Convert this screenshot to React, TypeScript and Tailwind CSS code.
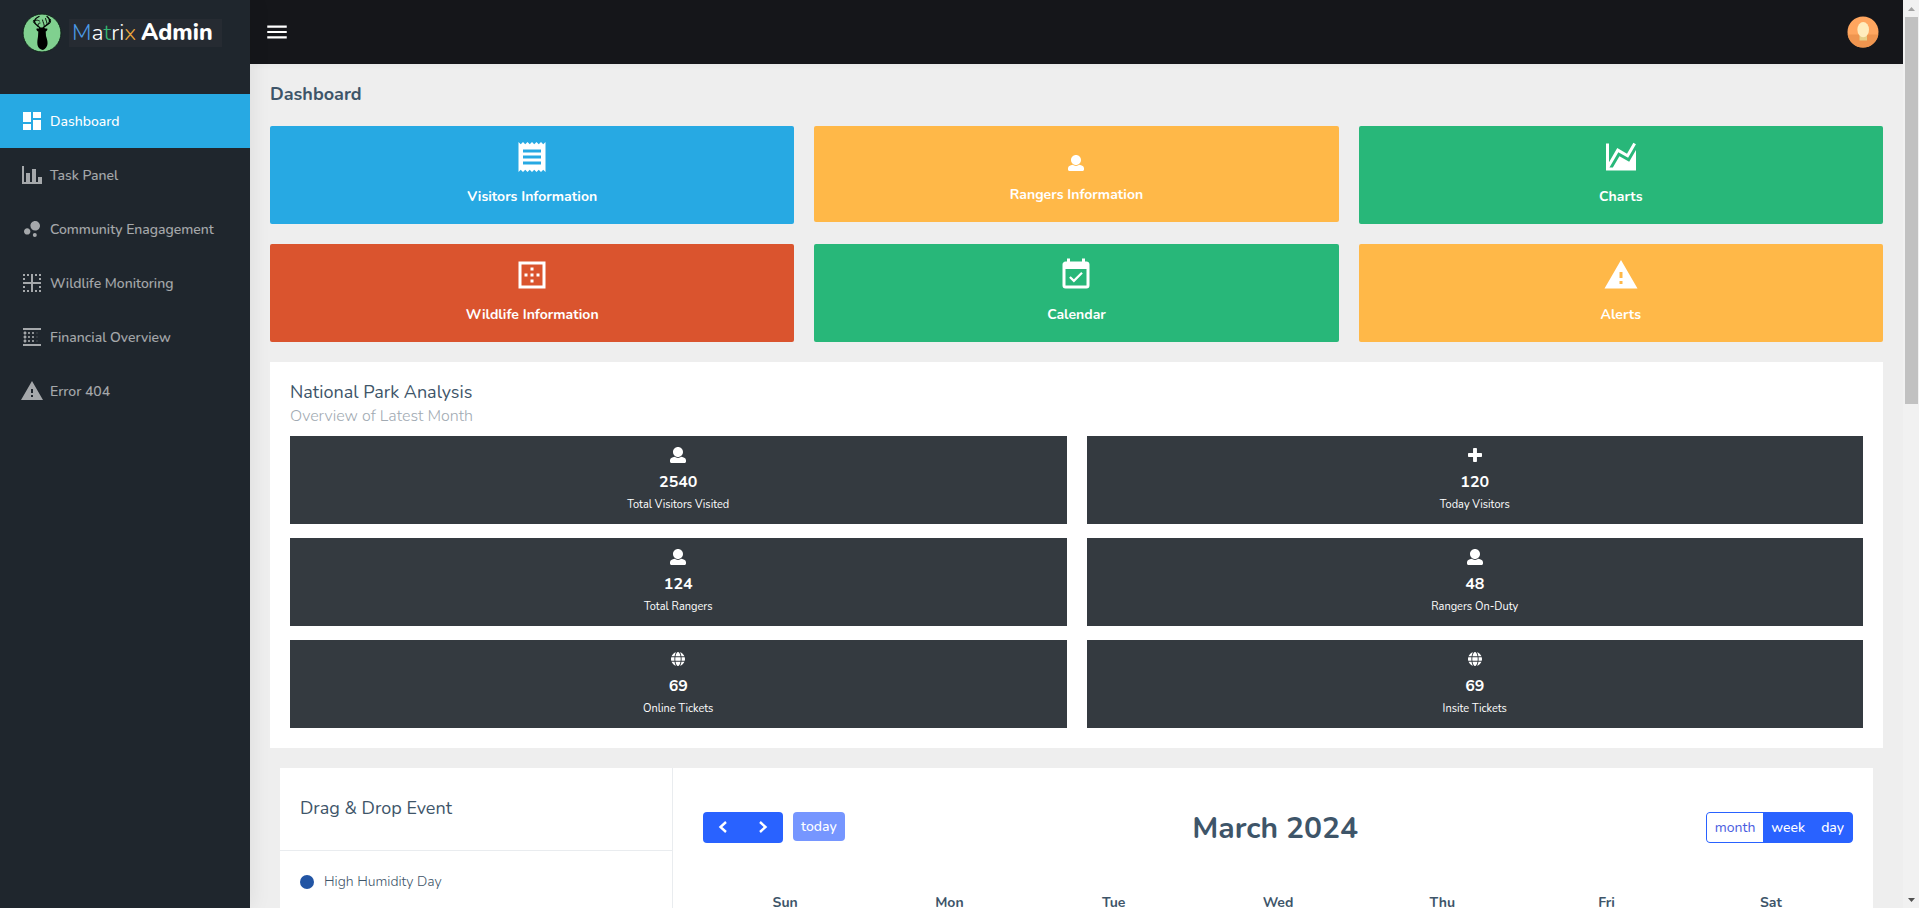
import type { ReactNode } from "react";
import { FaGlobe } from "react-icons/fa";
import { MdBlurLinear, MdBorderInner, MdBorderOuter, MdDashboard, MdMenu, MdReceipt } from "react-icons/md";

type IconProps = { className?: string };

function Glyph({ d, className, box = "0 0 24 24" }: { d: string; className?: string; box?: string }) {
  return (
    <svg viewBox={box} className={className} fill="currentColor" aria-hidden="true">
      <path d={d} />
    </svg>
  );
}

const ChartBar = ({ className }: IconProps) => (
  <Glyph className={className} d="M22,21H2V3H4V19H6V10H10V19H12V6H16V19H18V14H22V21Z" />
);
const ChartBubble = ({ className }: IconProps) => (
  <Glyph
    className={className}
    d="M7.2,11.2C8.97,11.2 10.4,12.63 10.4,14.4C10.4,16.17 8.97,17.6 7.2,17.6C5.43,17.6 4,16.17 4,14.4C4,12.63 5.43,11.2 7.2,11.2M14.8,16A2,2 0 0,1 16.8,18A2,2 0 0,1 14.8,20A2,2 0 0,1 12.8,18A2,2 0 0,1 14.8,16M15.2,4A4.8,4.8 0 0,1 20,8.8C20,11.45 17.85,13.6 15.2,13.6A4.8,4.8 0 0,1 10.4,8.8C10.4,6.15 12.55,4 15.2,4Z"
  />
);
const Alert = ({ className }: IconProps) => (
  <Glyph className={className} d="M13,14H11V10H13M13,18H11V16H13M1,21H23L12,2L1,21Z" />
);
const ChartArea = ({ className }: IconProps) => (
  <Glyph
    className={className}
    d="M17.45,15.18L22,7.31V19L22,21H2V3H4V15.54L9.5,6L16,9.78L20.24,2.45L21.97,3.45L16.74,12.5L10.23,8.75L4.31,19H6.57L10.96,11.44L17.45,15.18Z"
  />
);
const CalendarCheck = ({ className }: IconProps) => (
  <Glyph
    className={className}
    d="M19,19H5V8H19M19,3H18V1H16V3H8V1H6V3H5C3.89,3 3,3.9 3,5V19A2,2 0 0,0 5,21H19A2,2 0 0,0 21,19V5C21,3.89 20.1,3 19,3M16.53,11.06L15.47,10L10.59,14.88L8.47,12.76L7.41,13.82L10.59,17L16.53,11.06Z"
  />
);
const User = ({ className }: IconProps) => (
  <Glyph
    className={className}
    box="0 0 512 512"
    d="M256 0c88.366 0 160 71.634 160 160s-71.634 160-160 160S96 248.366 96 160 167.634 0 256 0zm183.283 333.821l-71.313-17.828c-74.923 53.89-165.738 41.864-223.94 0l-71.313 17.828C29.981 344.505 0 382.903 0 426.955V464c0 26.51 21.49 48 48 48h416c26.51 0 48-21.49 48-48v-37.045c0-44.052-29.981-82.45-72.717-93.134z"
  />
);
const Plus = ({ className }: IconProps) => (
  <Glyph
    className={className}
    box="0 0 448 512"
    d="M448 294.2v-76.4c0-13.3-10.7-24-24-24H286.2V56c0-13.3-10.7-24-24-24h-76.4c-13.3 0-24 10.7-24 24v137.8H24c-13.3 0-24 10.7-24 24v76.4c0 13.3 10.7 24 24 24h137.8V456c0 13.3 10.7 24 24 24h76.4c13.3 0 24-10.7 24-24V318.2H424c13.3 0 24-10.7 24-24z"
  />
);

const menu = [
  { label: "Dashboard", Icon: MdDashboard, active: true },
  { label: "Task Panel", Icon: ChartBar },
  { label: "Community Enagagement", Icon: ChartBubble },
  { label: "Wildlife Monitoring", Icon: MdBorderInner },
  { label: "Financial Overview", Icon: MdBlurLinear },
  { label: "Error 404", Icon: Alert },
];

const stats = [
  { value: "2540", label: "Total Visitors Visited", Icon: User },
  { value: "120", label: "Today Visitors", Icon: Plus },
  { value: "124", label: "Total Rangers", Icon: User },
  { value: "48", label: "Rangers On-Duty", Icon: User },
  { value: "69", label: "Online Tickets", Icon: FaGlobe },
  { value: "69", label: "Insite Tickets", Icon: FaGlobe },
];

const days = ["Sun", "Mon", "Tue", "Wed", "Thu", "Fri", "Sat"];

function Logo() {
  return (
    <a href="#" className="flex h-16 items-center pl-[22px]">
      <svg viewBox="0 0 40 40" className="size-10 shrink-0" aria-hidden="true">
        <circle cx="20" cy="21" r="19" fill="#80d08f" stroke="#10241a" strokeWidth="1" />
        <g fill="none" stroke="#000" strokeLinecap="round">
          <path d="M18.500 17C17.500 13.500 12.500 13.500 12.500 9.500C12.600 7 15 5.500 17 4.500" strokeWidth="1.300" />
          <path d="M13 11.500C11.500 11 11 10 11.500 8.500M12.800 8.500C14.500 7.500 16.500 8.500 17.500 9M16 14.500C15.500 12 16.500 11 18 11" strokeWidth="0.900" />
          <path d="M20.500 17C22 13 27 13.500 27.500 9.500C27.800 7.500 26.500 5.500 25 4.500" strokeWidth="1.300" />
          <path d="M26.800 12C28.500 11.500 29 9.500 28.500 7.500M25 13C25.500 10.500 24 9 23.500 6.500M22.300 14.500C22.300 12 21 10.500 20.500 8" strokeWidth="0.900" />
        </g>
        <path
          d="M18.500 15.500H21.500C22.500 16.500 24 16.500 25.500 16.700C25.300 18.500 24.300 19.200 23.700 19.600L24 24C25 27 25.800 29.500 25.500 32C25.300 34.500 23.500 37 21 38C18.500 37.800 16 36 15.500 33C15 30 15.500 27.500 16 24.500L16.300 19.600C15.500 19.200 14.500 18.500 14.300 16.700C16 16.500 17.500 16.500 18.500 15.500Z"
          fill="#000"
        />
      </svg>
      <span className="mt-0.5 ml-[7px] flex h-7 items-center gap-[5px] bg-[#262b32] pr-[9px] pl-[3px] text-[23px]/7">
        <span className="font-light text-white">
          <span className="text-[#4c9be8]">M</span>a<span className="text-[#35b673]">t</span>ri
          <span className="text-[#eaa63c]">x</span>
        </span>
        <span className="font-extrabold text-white">Admin</span>
      </span>
    </a>
  );
}

function Avatar() {
  return (
    <svg viewBox="0 0 32 32" className="size-8" aria-hidden="true">
      <defs>
        <clipPath id="avatar-round">
          <circle cx="16" cy="16" r="15.500" />
        </clipPath>
      </defs>
      <g clipPath="url(#avatar-round)">
        <rect width="32" height="32" fill="#ffa65f" />
        <rect y="18.500" width="32" height="14" fill="#ef954f" />
        <rect x="12.500" y="18" width="7.500" height="6.500" fill="#e6cf88" />
        <ellipse cx="16.200" cy="13.700" rx="5.800" ry="7.600" fill="#ffecbd" />
      </g>
    </svg>
  );
}

function Tile({ label, color, icon }: { label: string; color: string; icon: ReactNode }) {
  return (
    <a href="#" className={`flex flex-col items-center rounded-xs pb-4 text-sm/[22px] font-bold text-white ${color}`}>
      {icon}
      {label}
    </a>
  );
}

const tileIcon = "mt-[13px] mb-[11px] size-9";

function Scrollbar() {
  return (
    <div className="flex w-4 shrink-0 flex-col items-center bg-[#f1f1f1]" aria-hidden="true">
      <svg viewBox="0 0 16 17" className="h-[17px] w-4 shrink-0">
        <path d="M5 11L8.500 7L12 11Z" fill="#a3a3a3" />
      </svg>
      <div className="h-[387px] w-[13px] bg-[#c1c1c1]" />
      <svg viewBox="0 0 16 17" className="mt-auto h-[17px] w-4 shrink-0">
        <path d="M5 7L8.500 11L12 7Z" fill="#505050" />
      </svg>
    </div>
  );
}

export default function App() {
  return (
    <div className="flex h-screen overflow-hidden bg-[#eeeeee] font-[Nunito,Lato,sans-serif] text-sm text-[#3e5569]">
      <aside className="z-10 w-[250px] shrink-0 bg-[#1f262d] shadow-[1px_0_20px_rgba(0,0,0,0.08)]">
        <Logo />
        <nav className="mt-[30px]">
          {menu.map(({ label, Icon, active }) => (
            <a
              key={label}
              href="#"
              className={`flex h-[54px] items-center gap-[6px] pl-5 text-sm/6 font-medium text-white ${active ? "bg-[#27a9e3]" : ""}`}
            >
              <Icon className={`size-6 ${active ? "" : "opacity-60"}`} />
              <span className={`pt-0.5 ${active ? "" : "opacity-60"}`}>{label}</span>
            </a>
          ))}
        </nav>
      </aside>

      <div className="flex min-w-0 flex-1 flex-col">
        <header className="flex h-16 shrink-0 items-center justify-between bg-[#15161a] pr-6 pl-[14px] shadow-[1px_0_7px_rgba(0,0,0,0.05)]">
          <button type="button" aria-label="Toggle menu" className="text-white">
            <MdMenu className="size-[26px]" />
          </button>
          <button type="button" aria-label="Account">
            <Avatar />
          </button>
        </header>

        <main className="flex-1 overflow-hidden px-5">
          <h1 className="pt-[18px] pb-5 text-lg/6 font-bold">Dashboard</h1>

          <div className="grid grid-cols-3 items-start gap-5">
            <Tile label="Visitors Information" color="bg-[#27a9e3]" icon={<MdReceipt className={tileIcon} />} />
            <Tile
              label="Rangers Information"
              color="bg-[#ffb848]"
              icon={<User className="mt-[29px] mb-[13px] size-4" />}
            />
            <Tile label="Charts" color="bg-[#28b779]" icon={<ChartArea className={tileIcon} />} />
            <Tile label="Wildlife Information" color="bg-[#da542e]" icon={<MdBorderOuter className={tileIcon} />} />
            <Tile label="Calendar" color="bg-[#28b779]" icon={<CalendarCheck className={tileIcon} />} />
            <Tile label="Alerts" color="bg-[#ffb848]" icon={<Alert className={tileIcon} />} />
          </div>

          <section className="mt-5 bg-white p-5">
            <h2 className="text-lg/5">National Park Analysis</h2>
            <p className="text-base/7 font-light text-[#a1aab2]">Overview of Latest Month</p>
            <div className="mt-1.5 grid grid-cols-2 gap-x-5 gap-y-[14px]">
              {stats.map(({ value, label, Icon }) => (
                <div key={label} className="flex flex-col items-center bg-[#343a40] pt-[11px] pb-2 text-white">
                  <Icon className="h-4" />
                  <strong className="mt-[7px] text-base/6 font-bold">{value}</strong>
                  <span className="text-[11px]/[22px]">{label}</span>
                </div>
              ))}
            </div>
          </section>

          <section className="mx-[10px] mt-5 flex bg-white">
            <div className="w-[393px] border-r border-[#e9ecef]">
              <h2 className="border-b border-[#e9ecef] px-5 pt-7 pb-[30px] text-lg/6">Drag &amp; Drop Event</h2>
              <p className="flex h-[62px] items-center gap-[10px] px-5 font-light">
                <span className="size-[14px] rounded-full bg-[#2255a4]" />
                High Humidity Day
              </p>
            </div>
            <div className="flex-1 pt-[39px] pr-5 pl-[30px]">
              <div className="flex items-center justify-between">
                <div className="flex items-start gap-[10px]">
                  <div className="flex rounded-sm bg-[#2962ff] text-white">
                    <button type="button" aria-label="Previous" className="flex h-[31px] w-10 items-center justify-center">
                      <svg viewBox="0 0 12 12" className="size-3" fill="none" stroke="currentColor" strokeWidth="2.400" aria-hidden="true">
                        <path d="M9 1L3.500 6L9 11" />
                      </svg>
                    </button>
                    <button type="button" aria-label="Next" className="flex h-[31px] w-10 items-center justify-center">
                      <svg viewBox="0 0 12 12" className="size-3" fill="none" stroke="currentColor" strokeWidth="2.400" aria-hidden="true">
                        <path d="M3 1L8.500 6L3 11" />
                      </svg>
                    </button>
                  </div>
                  <button type="button" className="h-[29px] rounded-sm bg-[#7696ff] px-2 pt-px text-sm font-medium text-white">
                    today
                  </button>
                </div>
                <h2 className="pt-1 text-3xl/9 font-bold">March 2024</h2>
                <div className="flex h-[31px] overflow-hidden rounded-sm border border-[#2962ff] bg-[#2962ff] font-medium text-white">
                  <button type="button" className="bg-white px-2 pt-px font-normal text-[#4a5ce0]">
                    month
                  </button>
                  <button type="button" className="px-2 pt-px">
                    week
                  </button>
                  <button type="button" className="px-2 pt-px">
                    day
                  </button>
                </div>
              </div>
              <table className="mt-[45px] w-full table-fixed">
                <thead>
                  <tr>
                    {days.map((day) => (
                      <th key={day} scope="col" className="text-sm/[21px] font-bold">
                        {day}
                      </th>
                    ))}
                  </tr>
                </thead>
              </table>
            </div>
          </section>
        </main>
      </div>
      <Scrollbar />
    </div>
  );
}
